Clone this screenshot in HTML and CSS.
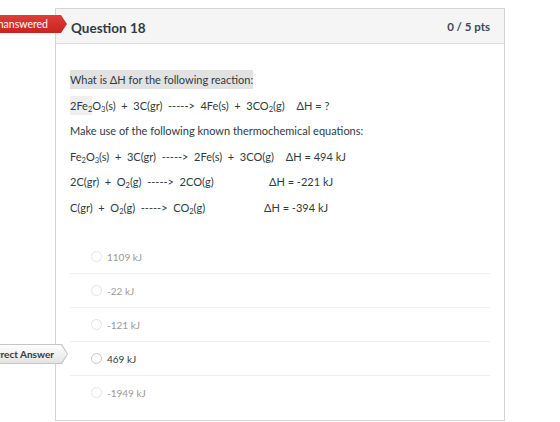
FILE: index.html
```html
<!DOCTYPE html>
<html lang="en">
<head>
<meta charset="UTF-8">
<title>Question 18</title>
<link rel="stylesheet" href="styles.css">
</head>
<body>
<div class="page">

<!-- status flags on the left edge -->
<div class="flag flag-red"><span>Unanswered</span></div>
<div class="flag flag-grey"><div class="flag-inner"><span>Correct Answer</span></div></div>

<div class="question">
    <div class="question-header">
        <span class="question-name">Question 18</span>
        <span class="question-points">0 / 5 pts</span>
    </div>

    <div class="question-text">
        <p><span class="hl">What is ΔH for the following reaction:</span></p>
        <p><span class="hl-soft">2Fe<sub>2</sub></span>O<sub>3</sub>(s)&nbsp; + &nbsp;3C(gr)&nbsp; -----&gt;&nbsp; 4Fe(s)&nbsp; + &nbsp;3CO<sub>2</sub>(g)<span class="dh">ΔH = ?</span></p>
        <p>Make use of the following known thermochemical equations:</p>
        <p>Fe<sub>2</sub>O<sub>3</sub>(s)&nbsp; + &nbsp;3C(gr)&nbsp; -----&gt;&nbsp; 2Fe(s)&nbsp; + &nbsp;3CO(g)<span class="dh">ΔH = 494 kJ</span></p>
        <p><span class="eq eq-2">2C(gr)&nbsp; + &nbsp;O<sub>2</sub>(g)&nbsp; -----&gt;&nbsp; 2CO(g)</span><span>ΔH = -221 kJ</span></p>
        <p><span class="eq eq-3">C(gr)&nbsp; + &nbsp;O<sub>2</sub>(g)&nbsp; -----&gt;&nbsp; CO<sub>2</sub>(g)</span><span>ΔH = -394 kJ</span></p>
    </div>

    <div class="answers">
        <div class="answer"><span class="radio"></span>1109 kJ</div>
        <div class="answer"><span class="radio"></span>-22 kJ</div>
        <div class="answer"><span class="radio"></span>-121 kJ</div>
        <div class="answer correct"><span class="radio"></span>469 kJ</div>
        <div class="answer"><span class="radio"></span>-1949 kJ</div>
    </div>
</div>

</div>
</body>
</html>
```

FILE: styles.css
```css
body {
margin: 0;
background-color: #fff;
font-family: Lato, "Open Sans", sans-serif;
color: #2d3b45;
}
.page {
position: relative;
width: 560px;
height: 422px;
overflow: hidden;
}
.question {
margin: 8px 0 0 55px;
width: 448px;
height: 411px;
border: 1px solid #d4d4d4;
}
.question-header {
display: flex;
justify-content: space-between;
align-items: center;
height: 34px;
padding: 0 14px 0 15px;
background-color: #f5f5f5;
border-bottom: 1px solid #ddd;
}
.question-name {
font-size: 13.5px;
font-weight: bold;
padding-top: 3px;
}
.question-points {
font-size: 11.5px;
font-weight: bold;
color: #3d4a54;
}
.question-text {
padding: 23px 14px 0 14px;
font-size: 11px;
color: #2d3b45;
}
.question-text p {
margin: 0;
line-height: 25.5px;
white-space: nowrap;
}
.question-text sub {
font-size: 7.5px;
vertical-align: -2px;
line-height: 0;
}
.hl {
background-color: #e2e2e2;
padding: 3px 0;
}
.hl-soft {
background-color: #efefef;
padding: 3px 0;
}
.dh {
margin-left: 12px;
}
.eq {
display: inline-block;
}
.eq-2 {
width: 199px;
}
.eq-3 {
width: 194px;
}
.answers {
margin: 20px 14px 0 14px;
}
.answer {
display: flex;
align-items: center;
height: 33px;
padding-left: 21px;
border-top: 1px solid #eee;
font-size: 10px;
color: #999;
}
.answer:first-child {
border-top: none;
}
.answer.correct {
color: #2d3b45;
}
.radio {
width: 9px;
height: 9px;
border: 1px solid #e4e4e4;
border-radius: 50%;
margin-right: 5px;
}
.answer.correct .radio {
border-color: #c8c8c8;
}

/* flags */
.flag {
position: absolute;
white-space: nowrap;
}
.flag-red {
top: 15px;
right: 493px;
height: 18px;
line-height: 18px;
padding: 0 19px 0 8px;
font-size: 10.5px;
color: #fff;
background: linear-gradient(#e03e3a, #c7231f);
clip-path: polygon(0 0, calc(100% - 6px) 0, 100% 50%, calc(100% - 6px) 100%, 0 100%);
}
.flag-grey {
top: 344px;
right: 492px;
height: 20px;
padding: 1px 1px 1px 0;
box-sizing: border-box;
background-color: #c6c6c6;
clip-path: polygon(0 0, calc(100% - 6px) 0, 100% 50%, calc(100% - 6px) 100%, 0 100%);
}
.flag-inner {
height: 18px;
line-height: 18px;
padding: 0 13px 0 8px;
font-size: 10px;
font-weight: bold;
color: #3b3b3b;
background: linear-gradient(#ffffff, #e4e4e4);
clip-path: polygon(0 0, calc(100% - 6px) 0, 100% 50%, calc(100% - 6px) 100%, 0 100%);
}
```
